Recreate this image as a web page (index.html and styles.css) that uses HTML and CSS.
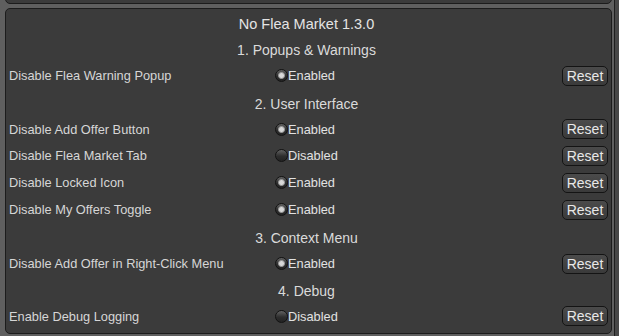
FILE: index.html
```html
<!DOCTYPE html>
<html>
<head>
<meta charset="utf-8">
<link rel="stylesheet" href="styles.css">
</head>
<body>
<div class="frame">
  <div class="main">
    <div class="toppanel"></div>
    <div class="panel">
      <div class="item title">No Flea Market 1.3.0</div>
      <div class="item head short">1. Popups &amp; Warnings</div>
      <div class="item row"><span class="label">Disable Flea Warning Popup</span><span class="toggle on"><i class="dot"></i>Enabled</span><button class="reset">Reset</button></div>
      <div class="item head">2. User Interface</div>
      <div class="item row short"><span class="label">Disable Add Offer Button</span><span class="toggle on"><i class="dot"></i>Enabled</span><button class="reset">Reset</button></div>
      <div class="item row"><span class="label">Disable Flea Market Tab</span><span class="toggle"><i class="dot"></i>Disabled</span><button class="reset">Reset</button></div>
      <div class="item row"><span class="label">Disable Locked Icon</span><span class="toggle on"><i class="dot"></i>Enabled</span><button class="reset">Reset</button></div>
      <div class="item row"><span class="label">Disable My Offers Toggle</span><span class="toggle on"><i class="dot"></i>Enabled</span><button class="reset">Reset</button></div>
      <div class="item head">3. Context Menu</div>
      <div class="item row"><span class="label">Disable Add Offer in Right-Click Menu</span><span class="toggle on"><i class="dot"></i>Enabled</span><button class="reset">Reset</button></div>
      <div class="item head short">4. Debug</div>
      <div class="item row short"><span class="label">Enable Debug Logging</span><span class="toggle"><i class="dot"></i>Disabled</span><button class="reset">Reset</button></div>
    </div>
  </div>
  <div class="scroll"></div>
</div>
</body>
</html>
```
FILE: styles.css
```css
html, body {
  margin: 0;
  padding: 0;
  width: 619px;
  height: 336px;
  overflow: hidden;
  background: #5f5f5f;
  font-family: "Liberation Sans", Arial, sans-serif;
  color: #d6d6d6;
}
.frame {
  display: flex;
  height: 336px;
}
.main {
  width: 615px;
  display: flex;
  flex-direction: column;
  padding-left: 5px;
  box-sizing: border-box;
}
.toppanel {
  height: 12px;
  margin-top: -8px;
  width: 607px;
  box-sizing: border-box;
  background: #3b3b3b;
  border: 1px solid #1c1c1c;
  border-radius: 0 0 5px 5px;
}
.panel {
  margin-top: 4px;
  width: 607px;
  height: 326px;
  box-sizing: border-box;
  background: #3b3b3b;
  border: 1px solid #1c1c1c;
  border-radius: 5px;
  padding: 0 3px 0 3px;
  display: flex;
  flex-direction: column;
}
.scroll {
  width: 4px;
  border-left: 1px solid #1e1e1e;
  background: #474747;
}
.item {
  height: 27px;
  flex: none;
  display: flex;
  align-items: center;
  box-sizing: border-box;
}
.item.short {
  height: 26px;
}
.title {
  justify-content: center;
  font-size: 14.5px;
  color: #e4e4e4;
  padding-right: 4px;
  padding-top: 2px;
}
.head {
  justify-content: center;
  font-size: 14px;
  color: #dadada;
  padding-right: 4px;
  padding-top: 2px;
}
.row {
  font-size: 12.8px;
}
.label {
  width: 266px;
}
.toggle {
  display: flex;
  align-items: center;
  color: #e2e2e2;
}
.dot {
  width: 13px;
  height: 13px;
  box-sizing: border-box;
  border-radius: 50%;
  border: 1px solid #121212;
  background: linear-gradient(#626262, #2e2e2e 55%, #232323);
  position: relative;
  display: inline-block;
}
.toggle.on .dot::after {
  content: "";
  position: absolute;
  left: 2px;
  top: 2px;
  width: 7px;
  height: 7px;
  box-sizing: border-box;
  border-radius: 50%;
  background: #d8d8d8;
  border: 1px solid #9a9a9a;
}
.reset {
  margin-left: auto;
  width: 46px;
  height: 20px;
  box-sizing: border-box;
  border: 1px solid #141414;
  border-radius: 5px;
  background: linear-gradient(#4b4b4b, #3a3a3a);
  color: #e8e8e8;
  font-family: "Liberation Sans", Arial, sans-serif;
  font-size: 14px;
  padding: 0;
  line-height: 18px;
}
```
